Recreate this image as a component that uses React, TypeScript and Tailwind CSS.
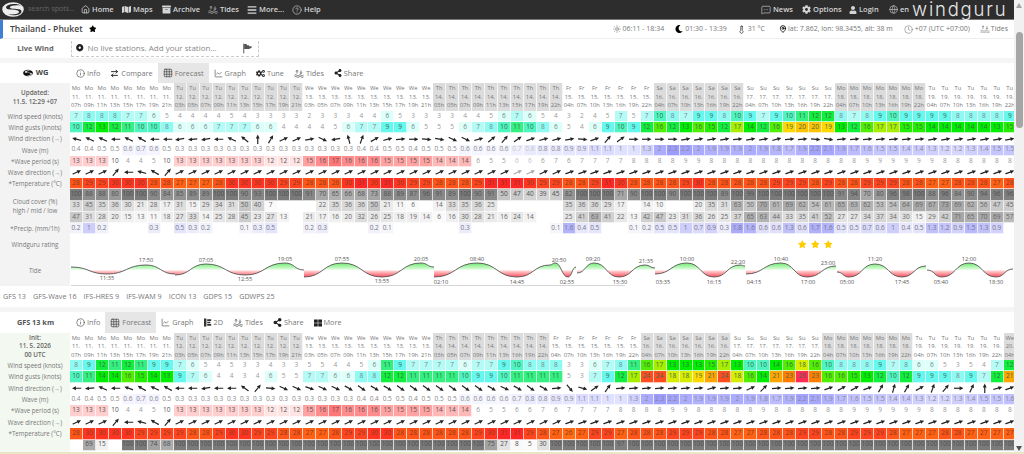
import React from 'react';
import { ArrowRightLeft, ChartLine, CircleHelp, Clock, Globe, Grid3x3, House, Info, MapPin, MessageSquareMore, Sun, Thermometer } from 'lucide-react';
import { FaArchive, FaBars, FaCog, FaCogs, FaDotCircle, FaMap, FaMoon, FaShareAlt, FaStar, FaThLarge, FaUser } from 'react-icons/fa';

type Num = number | null;
const _ = null;
const rep = (v: number, n: number): number[] => Array(n).fill(v);

const h2 = ['03h', '05h', '07h', '09h', '11h', '13h', '15h', '17h', '19h', '21h'];
const h3 = ['04h', '07h', '10h', '13h', '16h', '19h', '22h'];

const days1 = [
  { d: 'Mo', n: '11.', hours: ['07h', '09h', '11h', '13h', '15h', '17h', '19h', '21h'], grey: false },
  { d: 'Tu', n: '12.', hours: h2, grey: true },
  { d: 'We', n: '13.', hours: h2, grey: false },
  { d: 'Th', n: '14.', hours: ['03h', '05h', '07h', '09h', '11h', '13h', '15h', '17h', '19h', '22h'], grey: true },
  { d: 'Fr', n: '15.', hours: h3, grey: false },
  { d: 'Sa', n: '16.', hours: h3, grey: true },
  { d: 'Su', n: '17.', hours: h3, grey: false },
  { d: 'Mo', n: '18.', hours: h3, grey: true },
  { d: 'Tu', n: '19.', hours: h3, grey: false },
];
const days2 = [
  days1[0], days1[1], days1[2],
  { d: 'Th', n: '14.', hours: ['03h', '05h', '07h', '09h', '11h', '13h', '16h', '19h', '22h'], grey: true },
  days1[4], days1[5], days1[6], days1[7], days1[8],
  { d: 'We', n: '20.', hours: ['04h'], grey: true },
];

const speed1 = [7,8,8,8,7,7,6,5, 4,4,4,4,5,4,3,3,3,3, 2,3,3,3,4,4,6,5,3,3, 3,3,4,4,5,6,7,6,5,4, 3,2,4,5,7,5,7, 10,8,7,9,9,8,10, 9,7,9,10,11,12,12, 8,7,8,9,10,9,9, 9,9,8,8,8,8,9];
const gust1 = [10,12,13,12,11,10,10,8, 6,6,6,7,7,7,6,6,4,4, 4,4,5,6,7,7,9,9,6,5, 5,5,6,7,8,10,11,10,8,6, 5,4,6,9,10,9,12, 16,12,13,16,15,12,17, 14,12,16,19,20,20,19, 13,12,16,17,17,15,15, 14,14,14,14,14,13,15];
const dir1 = [-165,-155,-155,180,-155,-150,180,180, 170,175,170,180,-155,-140,-90,-60,-25,-25, -10,25,170,-105,-70,-30,-15,-5,0,5, 10,25,25,-15,-40,-50,-35,-20,-15,-15, -10,5,-20,-50,-35,0,0, 0,0,-10,-10,-10,-10,-5, -10,-10,-15,-5,-5,5,10, ...rep(-5, 7), ...rep(-10, 7)];
const wave1 = [.4,.4,.5,.5,.6,.7,.6,.5, ...rep(.3, 10), .3,.3,.3,.3,.4,.4,.5,.5,.4,.5, .5,.5,.6,.6,.6,.6,.7,.8,.8,.8, .9,.9,1.1,1.1,1,1,1.3, 2,2.3,2.2,2,1.9,1.9,1.9, 2,1.9,1.8,1.7,1.9,2.2,2.1, 1.9,1.7,1.6,1.5,1.5,1.4,1.4, 1.3,1.2,1.2,1.3,1.4,1.5,1.5];
const period1 = [13,13,13,10,4,4,5,10, 13,13,13,13,13,13,13,12,12,12, 15,16,17,16,16,16,15,15,15,15, 14,14,14,6,5,5,6,6,6,7, 6,7,7,7,7,8,8, 8,8,9,9,8,8,8, 8,8,8,8,8,8,8, 8,8,9,9,9,9,9, 9,8,8,8,8,8,8];
const waveDir = [-25,-25,-25,-50,180,-165,-150,-50, ...rep(-25, 30), ...rep(-20, 35)];
const temp1 = [28,29,29,30,30,30,28,28, 27,27,27,28,30,30,30,30,29,29, 28,28,28,30,31,30,31,30,29,29, 28,28,28,29,31,31,31,30,29,29, 28,28,29,31,30,28,28, 28,28,29,30,28,28,28, 28,28,29,29,29,28,29, 28,28,29,29,29,28,28, 27,27,28,28,28,27,28];
const high1 = [100,88,88,80,100,100,90,84, 85,89,89,100,100,90,93,100,100,100, 91,70,65,66,68,73,88,89,87,96, 91,89,100,90,91,50,47,40,39,45, 82,100,100,100,71,90,100, 100,90,100,100,100,89,100, 99,100,100,100,100,100,100, 91,94,70,80,96,98,100, 88,96,84,90,94,96,96];
const mid1: Num[] = [33,45,35,36,30,21,28,17, 31,15,29,34,31,50,40,7,_,_, _,22,35,36,36,50,21,11,6,_, 14,33,35,36,25,_,_,_,_,_, 35,36,36,29,17,_,14, 10,_,_,20,35,31,63, 50,70,61,69,62,54,61, 65,63,62,53,54,64,69, 67,73,69,62,56,47,45];
const low1: Num[] = [47,31,28,20,15,13,11,18, 27,33,14,25,28,45,23,27,13,_, 21,17,16,20,32,26,25,18,19,14, 6,16,30,28,21,16,24,14,_,_, 25,41,63,41,22,13,42, 47,23,31,36,26,25,37, 65,63,44,33,35,41,52, 27,27,34,37,34,30,15, 29,42,71,65,70,69,57];
const precip1: Num[] = [.2,1,.2,_,_,_,.3,_, .5,.3,.2,_,_,.1,.3,.5,_,_, .2,.3,_,_,_,.2,.1,_,_,_, _,_,.3,_,_,_,_,_,_,.1, 1.6,.4,.5,_,_,.1,.2, .5,.5,1,.7,.9,.3,1.8, 1.6,.6,.6,1.3,.6,1.7,1.6, .5,.5,.7,.6,1,.4,.5, 1.3,1.2,.9,1.5,1.3,.9,_];

const speed2 = [8,9,12,11,12,11,9,9, 7,6,5,4,5,3,3,4,3,3, 5,5,4,4,5,6,11,9,7,7, 7,7,6,7,7,9,10,8,8, 8,3,3,6,7,8,11, 16,17,13,13,13,15,17, 13,10,10,14,16,18,16, 10,8,8,8,9,7,8, 6,6,5,3,5,4,7, 12];
const gust2 = [10,11,14,14,16,15,14,13, 9,7,6,4,4,3,4,6,5,5, 7,7,6,6,8,8,12,12,11,11, 11,11,10,9,9,10,11,11,11, 11,5,3,7,9,12,17, 24,24,18,18,19,21,24, 18,16,14,21,23,26,23, 16,16,15,13,12,10,12, 9,9,9,8,9,7,12, 21];
const dir2 = [180,175,-155,180,-160,-150,-155,-150, 180,180,170,180,180,-145,-50,5,25,25, 20,25,25,30,35,30,30,35,35,35, 35,35,35,35,30,25,30,35,30, -5,50,15,-35,-55,-5,-5, -5,-5,-5,-5,-5,-15,-5, -5,-25,-45,-5,-5,-5,-5, -20,-30,-30,-20,-60,-75,-60, -30,-70,-50,0,-65,-90,-15, -20];
const wave2 = [.4,.4,.5,.5,.6,.7,.6,.5, ...rep(.3, 10), .3,.3,.3,.3,.4,.4,.5,.5,.4,.5, .5,.5,.6,.6,.6,.6,.7,.8,.8, .9,.9,1.1,1.1,1,1,1.3, 2,2.3,2.2,2,1.9,1.9,1.9, 2,1.9,1.8,1.7,1.9,2.2,2.1, 1.9,1.7,1.6,1.5,1.5,1.4,1.4, 1.3,1.2,1.2,1.3,1.4,1.5,1.5, 1.6];
const period2 = [13,13,13,10,4,4,5,10, 13,13,13,13,13,13,13,12,12,12, 15,16,17,16,16,16,15,15,15,15, 14,14,14,6,5,5,6,6,7, 6,7,7,7,7,8,8, 8,8,9,9,8,8,8, 8,8,9,8,8,8,8, 8,8,9,9,9,9,9, 9,8,8,8,8,8,8, 8];
const temp2 = [28,30,30,30,30,29,29,29, 29,28,28,29,30,30,29,29,28,28, 27,27,28,29,29,30,30,28,28,28, 28,28,28,29,30,31,31,29,28, 27,26,27,29,29,27,28, 28,28,29,29,29,28,28, 27,27,28,28,28,29,29, 28,28,29,29,29,28,27, 27,27,28,28,27,27,27, 27];
const cloud2: Num[] = [_,69,15,_,100,100,74,68, ...rep(100, 24), 75,27,8,5,30, 100,100,100,100,100,97, ...rep(100, 30)];

const windScale: Record<number, string> = {
  5: '#ffffff', 6: '#dcfff9', 7: '#b4fbf6', 8: '#8ffaf2', 9: '#66f7ee', 10: '#4ff5c0', 11: '#33f080', 12: '#12ee3c',
  13: '#00ee00', 14: '#00ec00', 15: '#24ee00', 16: '#50ee00', 17: '#a8ee00', 18: '#d8ee00', 19: '#ffd800', 20: '#ffc200',
  21: '#ffa400', 22: '#ff9000', 23: '#ff7e00', 24: '#ff4c20', 25: '#ff3a30', 26: '#ff2a55',
};
const windBg = (v: number) => (v < 5 ? '#ffffff' : windScale[v]);
const windText = (v: number) => (v < 6 ? '#999999' : v < 9 ? '#778888' : '#3d6b4a');

const waveBg = (v: number) => {
  if (v < 0.6) return '#ffffff';
  const c = Math.round(250 - (v - 0.5) * 52);
  return `rgb(${c},${c},255)`;
};
const periodBg = (v: number) => {
  if (v < 12) return '#ffffff';
  const c = Math.round(228 - (v - 12) * 22);
  return `rgb(255,${c},${c})`;
};
const tempScale: Record<number, string> = { 26: '#ff6c12', 27: '#ff6214', 28: '#ff5518', 29: '#ff4520', 30: '#ff3522', 31: '#ff2626' };
const cloudBg = (v: number) => {
  const c = Math.round(255 - 133 * Math.pow(v / 100, 1.2));
  return `rgb(${c},${c},${c})`;
};
const precipBg = (v: number) => {
  const c = Math.round(250 - v * 44);
  return `rgb(${c},${c},250)`;
};

function Arrow({ angle, light }: { angle: number; light?: boolean }) {
  return (
    <svg viewBox="0 0 12 8" className="w-[9.5px] h-[6.5px]" style={{ transform: `rotate(${angle}deg)` }}>
      <path d="M0 4H7.5" stroke={light ? '#aaaaaa' : '#222222'} strokeWidth="1.5" />
      <path d="M7 1.6L12 4L7 6.4Z" fill={light ? '#aaaaaa' : '#222222'} />
    </svg>
  );
}

function DataRow({ values, rowClass, bg, color, fade }: {
  values: Num[];
  rowClass: string;
  bg: (v: number) => string;
  color?: (v: number) => string;
  fade?: boolean;
}) {
  return (
    <div className={`flex ${rowClass}`}>
      {values.map((v, i) => (
        <div
          key={i}
          className="flex-none w-[12.97px] flex items-center justify-center border-r border-b border-white/70 text-[6.5px] leading-none text-[#666666]"
          style={v === null ? undefined : { backgroundColor: bg(v), color: fade && (i === 34 || i === 35) ? '#c4c4c4' : color ? color(v) : undefined }}
        >
          {v === null ? '' : v}
        </div>
      ))}
    </div>
  );
}

function ArrowRow({ values, rowClass, fade }: { values: number[]; rowClass: string; fade?: boolean }) {
  return (
    <div className={`flex ${rowClass}`}>
      {values.map((a, i) => (
        <div key={i} className="flex-none w-[12.97px] flex items-center justify-center">
          <Arrow angle={a} light={fade && (i === 34 || i === 35)} />
        </div>
      ))}
    </div>
  );
}

function DateHeader({ days, heightClass }: { days: typeof days1; heightClass: string }) {
  return (
    <div className={`flex ${heightClass}`}>
      {days.map((day, di) =>
        day.hours.map((h, i) => (
          <div
            key={`${di}-${i}`}
            className={`flex-none w-[12.97px] flex flex-col items-center justify-center text-[5.8px] leading-[8.6px] text-[#777777] border-r border-white/70 ${day.grey ? 'bg-[#dcdcdc]' : 'bg-white'}`}
          >
            <span>{day.d}</span>
            <span>{day.n}</span>
            <span>{h}</span>
          </div>
        ))
      )}
    </div>
  );
}

function Logo({ dark }: { dark?: boolean }) {
  return (
    <svg viewBox="0 0 44 30" className={dark ? 'w-[10px] h-[8px]' : 'w-[22px] h-[15px]'}>
      <ellipse cx="22" cy="15" rx="21.5" ry="14.5" fill={dark ? '#111111' : '#eeeeee'} />
      <path d="M40 7C28 1 8 4 8 11C8 18 34 13 34 20C34 24 22 26 12 24C22 29 38 27 39 19C40 11 17 16 16 11C15 7 30 6 40 7Z" fill={dark ? '#ffffff' : '#2d2d2d'} />
    </svg>
  );
}

function TidesIcon({ className }: { className: string }) {
  return (
    <svg viewBox="0 0 20 16" className={className} fill="none" stroke="currentColor" strokeWidth="1.3">
      <path d="M1 11.5c2-1.2 3-1.2 4.5 0s3 1.2 4.5 0 3-1.2 4.5 0 3 1.2 4.5 0" />
      <path d="M1 14.8c2-1.2 3-1.2 4.5 0s3 1.2 4.5 0 3-1.2 4.5 0 3 1.2 4.5 0" />
      <path d="M6 8V2M4 4l2-2.5L8 4M14 2v6M12 6l2 2.5L16 6" />
    </svg>
  );
}

function NavItem({ icon, text, className }: { icon: React.ReactNode; text: string; className: string }) {
  return (
    <div className={`flex items-center gap-[2px] ${className}`}>
      {icon}
      <span>{text}</span>
    </div>
  );
}

function TopBar() {
  return (
    <div className="h-[20px] flex items-center bg-[#2d2d2d] border-b border-[#777777] text-[#d4d4d4] text-[7.5px] font-semibold">
      <div className="ml-[2px] mr-[4px]"><Logo /></div>
      <span className="w-[53px] text-[#666666] text-[7px] font-normal">search spots...</span>
      <NavItem className="w-[41px]" text="Home" icon={<House size={9} strokeWidth={2} />} />
      <NavItem className="w-[40px]" text="Maps" icon={<FaMap size={9} />} />
      <NavItem className="w-[46px]" text="Archive" icon={<FaArchive size={9} />} />
      <NavItem className="w-[39px]" text="Tides" icon={<TidesIcon className="w-[10px] h-[9px]" />} />
      <NavItem className="w-[45px]" text="More..." icon={<FaBars size={10} />} />
      <NavItem text="Help" className="" icon={<CircleHelp size={10} strokeWidth={1.5} />} />
      <div className="flex-1" />
      <NavItem className="w-[41px]" text="News" icon={<MessageSquareMore size={10} strokeWidth={1.5} />} />
      <NavItem className="w-[47px]" text="Options" icon={<FaCog size={9} />} />
      <NavItem className="w-[40px]" text="Login" icon={<FaUser size={8} />} />
      <NavItem className="w-[23px]" text="en" icon={<Globe size={9} strokeWidth={1.5} />} />
      <span className="w-[102px] font-['Inter'] font-light text-[18.5px] leading-none tracking-[1.8px] text-[#e8e8e8] whitespace-nowrap">windguru</span>
    </div>
  );
}

function StationBar() {
  return (
    <div className="h-[19px] flex items-center border-l-[3px] border-[#3f7fd4] border-b border-b-[#eeeeee] text-[7px] text-[#777777]">
      <span className="ml-[7px] font-semibold text-[8.6px] text-[#444444]">Thailand - Phuket</span>
      <FaStar size={7.5} className="ml-[6px] text-black" />
      <div className="flex-1" />
      <div className="flex items-center gap-[2px] mr-[11px]"><Sun size={8} strokeWidth={2} /><span>06:11 - 18:34</span></div>
      <div className="flex items-center gap-[2px] mr-[10px]"><FaMoon size={8} className="text-black" /><span>01:30 - 13:39</span></div>
      <div className="flex items-center gap-[2px] mr-[14px]"><Thermometer size={9} className="text-[#333333]" /><span>31 °C</span></div>
      <div className="flex items-center gap-[1px] mr-[11px]"><MapPin size={8} strokeWidth={2.5} className="text-black" /><span>lat: 7.862, lon: 98.3455, alt: 38 m</span></div>
      <div className="flex items-center gap-[2px] mr-[10px]"><Clock size={9} strokeWidth={1.5} /><span>+07 (UTC +07:00)</span></div>
      <div className="flex items-center gap-[1px] mr-[6px]"><TidesIcon className="w-[10px] h-[8px]" /><span>Tides</span></div>
    </div>
  );
}

function LiveWind() {
  return (
    <div className="h-[19px] flex items-center">
      <span className="w-[71px] text-center font-bold text-[7.5px] text-[#666666]">Live Wind</span>
      <div className="w-[188px] h-[16px] flex items-center border-x border-b border-dashed border-[#cccccc] text-[8px] text-[#888888]">
        <FaDotCircle size={7.5} className="ml-[4px] mr-[4px] text-[#222222]" />
        <span>No live stations. Add your station...</span>
        <div className="flex-1" />
        <svg viewBox="0 0 12 14" className="w-[9px] h-[11px] mr-[6px]">
          <path d="M1 0.5V13.5" stroke="#555555" strokeWidth="1.3" />
          <path d="M1.5 1H5V2.5H8V4H11.5V6L8 7.5H1.5Z" fill="#555555" />
        </svg>
      </div>
    </div>
  );
}

function Tab({ icon, text, active }: { icon: React.ReactNode; text: string; active?: boolean }) {
  return (
    <div className={`h-full flex items-center gap-[2px] px-[5px] ${active ? 'bg-[#e6e6e6]' : ''}`}>
      {icon}
      <span>{text}</span>
    </div>
  );
}

const twoD = (
  <svg viewBox="0 0 10 10" className="w-[8px] h-[9px]" fill="#333333">
    <path d="M0 0H3V10H0ZM4 1H9V3H4ZM4 4H8V6H4ZM4 7H9V9H4Z" />
  </svg>
);

const labelClass = 'flex items-center justify-center text-center text-[6.2px] text-[#777777] whitespace-nowrap';

function Labels({ rowClass, cloudClass, cloud2Lines }: { rowClass: string; cloudClass: string; cloud2Lines: boolean }) {
  const names = ['Wind speed (knots)', 'Wind gusts (knots)', 'Wind direction (→)', 'Wave (m)', '*Wave period (s)', 'Wave direction (→)', '*Temperature (°C)'];
  return (
    <>
      {names.map((n) => (
        <div key={n} className={`${labelClass} ${rowClass}`}>{n}</div>
      ))}
      <div className={`${labelClass} ${cloudClass} flex-col leading-[9px]`}>
        <span>Cloud cover (%)</span>
        {cloud2Lines && <span>high / mid / low</span>}
      </div>
    </>
  );
}

const tideSegments: [number, number][][] = [
  [[71, 267], [107, 274], [146, 265], [175, 274]],
  [[175, 275], [206, 264], [245, 275], [285, 263], [304, 270]],
  [[304, 277], [342, 263], [382, 277], [421, 263], [434, 267]],
  [[434, 277], [477, 263], [517, 277], [550, 265], [555, 263], [568, 277], [576, 267]],
  [[577, 273], [594, 263], [619, 277], [645, 265], [655, 268]],
  [[655, 274], [687, 263], [714, 277], [740, 265], [745, 266]],
  [[746, 274], [781, 263], [807, 277], [836, 266]],
  [[837, 272], [849, 277], [875, 264], [902, 277], [926, 266]],
  [[927, 270], [942, 277], [969, 263], [996, 277], [1013, 269]],
];

const tideLabels: [number, number, string][] = [
  [107, 280, '11:35'], [146, 262, '17:50'], [206, 262, '07:05'], [245, 281, '12:55'], [285, 261, '19:05'],
  [342, 261, '07:55'], [382, 283, '13:55'], [421, 261, '20:05'], [441, 284, '02:10'], [477, 261, '08:40'],
  [517, 284, '14:45'], [559, 262, '20:50'], [567, 284, '02:55'], [593, 261, '09:20'], [620, 284, '15:30'],
  [646, 263, '21:35'], [663, 284, '03:35'], [687, 261, '10:00'], [714, 284, '16:15'], [738, 264, '22:20'],
  [754, 284, '04:15'], [781, 261, '10:40'], [808, 284, '17:00'], [828, 265, '23:00'], [847, 284, '05:00'],
  [875, 261, '11:20'], [902, 284, '17:45'], [941, 284, '05:40'], [969, 261, '12:00'], [996, 284, '18:30'],
];

const curve = (pts: [number, number][]) =>
  pts.map(([x, y], i) => {
    if (i === 0) return `M${x} ${y}`;
    const [px, py] = pts[i - 1];
    const mx = (px + x) / 2;
    return `C${mx} ${py} ${mx} ${y} ${x} ${y}`;
  }).join('');

function TideChart() {
  return (
    <svg viewBox="70 255 944 31" className="w-[944px] h-[31px] block">
      <defs>
        <linearGradient id="tideFill" gradientUnits="userSpaceOnUse" x1="0" y1="262" x2="0" y2="278">
          <stop offset="0" stopColor="#5fe85f" />
          <stop offset="0.46" stopColor="#dcfcdc" />
          <stop offset="0.5" stopColor="#ffffff" />
          <stop offset="0.56" stopColor="#ffd0d0" />
          <stop offset="1" stopColor="#ff3a4c" />
        </linearGradient>
      </defs>
      <path d="M71 285.5H625" stroke="#cccccc" strokeWidth="0.8" />
      {tideSegments.map((pts, i) => {
        const line = curve(pts);
        const first = pts[0][0];
        const last = pts[pts.length - 1][0];
        return (
          <g key={i}>
            <path d={`${line}L${last} 270L${first} 270Z`} fill="url(#tideFill)" />
            <path d={line} fill="none" stroke="#555555" strokeWidth="0.9" />
          </g>
        );
      })}
      {tideLabels.map(([x, y, t]) => (
        <text key={t + x} x={x} y={y} textAnchor="middle" fontSize="5.6" fontFamily="Open Sans" fill="#555555">{t}</text>
      ))}
    </svg>
  );
}

function RatingRow() {
  return (
    <div className="h-[21px] flex items-center">
      {rep(0, 73).map((_v, i) => (
        <div key={i} className="flex-none w-[12.97px] flex items-center justify-center">
          {i >= 56 && i <= 58 && <FaStar size={8.5} className="text-[#ffcc00]" />}
        </div>
      ))}
    </div>
  );
}

const periodText = (v: number) => (v < 10 ? '#999999' : '#555555');
const waveText = () => '#888888';
const tempText = () => '#8a3a1e';
const cloudText = () => '#4f4f4f';

export default function App() {
  const r1 = 'h-[11.2px]';
  const r2 = 'h-[11.35px]';
  const iconClass = 'text-[#333333]';
  const models = ['GFS 13', 'GFS-Wave 16', 'IFS-HRES 9', 'IFS-WAM 9', 'ICON 13', 'GDPS 15', 'GDWPS 25'];

  return (
    <div className="relative w-[1024px] h-[454px] overflow-hidden flex bg-white font-['Open_Sans',sans-serif]">
      <div className="w-[1014px] flex-none overflow-hidden">
        <TopBar />
        <StationBar />
        <LiveWind />
        <div className="h-[5px] bg-[#f5f5f5]" />

        <div className="h-[20px] flex items-center text-[7.3px] text-[#777777]">
          <div className="w-[71px] flex items-center justify-center gap-[3px] font-bold text-[7.5px] text-[#444444]"><Logo dark /><span>WG</span></div>
          <Tab text="Info" icon={<Info size={9} strokeWidth={1.5} className={iconClass} />} />
          <Tab text="Compare" icon={<ArrowRightLeft size={9} strokeWidth={2.5} className="text-[#222222]" />} />
          <Tab text="Forecast" active icon={<Grid3x3 size={10} strokeWidth={1.5} className={iconClass} />} />
          <Tab text="Graph" icon={<ChartLine size={9} strokeWidth={1.5} className={iconClass} />} />
          <Tab text="Tune" icon={<FaCogs size={9} className="text-[#222222]" />} />
          <Tab text="Tides" icon={<TidesIcon className="w-[10px] h-[9px] text-[#333333]" />} />
          <Tab text="Share" icon={<FaShareAlt size={8} className="text-[#222222]" />} />
        </div>

        <div className="flex">
          <div className="flex-none w-[70px] bg-[#f3f3f3]">
            <div className="h-[28px] flex flex-col items-center justify-center text-[6.3px] font-semibold leading-[9px] text-[#666666]">
              <span>Updated:</span>
              <span>11.5. 12:29 +07</span>
            </div>
            <Labels rowClass={r1} cloudClass="h-[33.6px]" cloud2Lines />
            <div className={`${labelClass} ${r1}`}>*Precip. (mm/1h)</div>
            <div className={`${labelClass} h-[21px]`}>Windguru rating</div>
            <div className={`${labelClass} h-[31px]`}>Tide</div>
          </div>
          <div>
            <DateHeader days={days1} heightClass="h-[28px]" />
            <DataRow rowClass={r1} values={speed1} bg={windBg} color={windText} />
            <DataRow rowClass={r1} values={gust1} bg={windBg} color={windText} />
            <ArrowRow rowClass={r1} values={dir1} />
            <DataRow rowClass={r1} values={wave1} bg={waveBg} color={waveText} fade />
            <DataRow rowClass={r1} values={period1} bg={periodBg} color={periodText} fade />
            <ArrowRow rowClass={r1} values={waveDir} fade />
            <DataRow rowClass={r1} values={temp1} bg={(v) => tempScale[v]} color={tempText} />
            <DataRow rowClass={r1} values={high1} bg={cloudBg} color={cloudText} />
            <DataRow rowClass={r1} values={mid1} bg={cloudBg} />
            <DataRow rowClass={r1} values={low1} bg={cloudBg} />
            <DataRow rowClass={r1} values={precip1} bg={precipBg} color={() => '#777788'} />
            <RatingRow />
            <TideChart />
          </div>
        </div>

        <div className="h-[21px] flex items-center gap-[7px] pl-[3px] text-[7.2px] text-[#777777]">
          {models.map((m) => <span key={m}>{m}</span>)}
        </div>
        <div className="h-[5px] bg-[#f5f5f5]" />

        <div className="h-[21px] flex items-center text-[7.3px] text-[#777777]">
          <div className="w-[71px] text-center font-bold text-[7.3px] text-[#555555]">GFS 13 km</div>
          <Tab text="Info" icon={<Info size={9} strokeWidth={1.5} className={iconClass} />} />
          <Tab text="Forecast" active icon={<Grid3x3 size={10} strokeWidth={1.5} className={iconClass} />} />
          <Tab text="Graph" icon={<ChartLine size={9} strokeWidth={1.5} className={iconClass} />} />
          <Tab text="2D" icon={twoD} />
          <Tab text="Tides" icon={<TidesIcon className="w-[10px] h-[9px] text-[#333333]" />} />
          <Tab text="Share" icon={<FaShareAlt size={9} className="text-[#222222]" />} />
          <Tab text="More" icon={<FaThLarge size={8} className="text-[#222222]" />} />
        </div>

        <div className="flex">
          <div className="flex-none w-[70px] bg-[#f3f8f1]">
            <div className="h-[27px] flex flex-col items-center justify-center text-[6.3px] font-semibold leading-[8.6px] text-[#666666]">
              <span>Init:</span>
              <span>11. 5. 2026</span>
              <span>00 UTC</span>
            </div>
            <Labels rowClass={r2} cloudClass="h-[34px] pt-[10px]" cloud2Lines={false} />
          </div>
          <div>
            <DateHeader days={days2} heightClass="h-[27px]" />
            <DataRow rowClass={r2} values={speed2} bg={windBg} color={windText} />
            <DataRow rowClass={r2} values={gust2} bg={windBg} color={windText} />
            <ArrowRow rowClass={r2} values={dir2} />
            <DataRow rowClass={r2} values={wave2} bg={waveBg} color={waveText} />
            <DataRow rowClass={r2} values={period2} bg={periodBg} color={periodText} />
            <ArrowRow rowClass={r2} values={waveDir} />
            <DataRow rowClass={r2} values={temp2} bg={(v) => tempScale[v]} color={tempText} />
            <DataRow rowClass={r2} values={cloud2} bg={cloudBg} color={cloudText} />
          </div>
        </div>
      </div>

      <div className="flex-none w-[10px] bg-[#f1f1f1] flex flex-col items-center">
        <div className="mt-[3px] w-0 h-0 border-x-[3.5px] border-x-transparent border-b-[5px] border-b-[#a3a3a3]" />
        <div className="mt-[24px] w-[7px] h-[96px] rounded-[4px] bg-[#a6a6a6]" />
        <div className="flex-1" />
        <div className="mb-[3px] w-0 h-0 border-x-[3.5px] border-x-transparent border-t-[5px] border-t-[#505050]" />
      </div>

      <div className="absolute bottom-0 left-0 right-0 h-[2px] bg-[#e9e6c6]" />
    </div>
  );
}
